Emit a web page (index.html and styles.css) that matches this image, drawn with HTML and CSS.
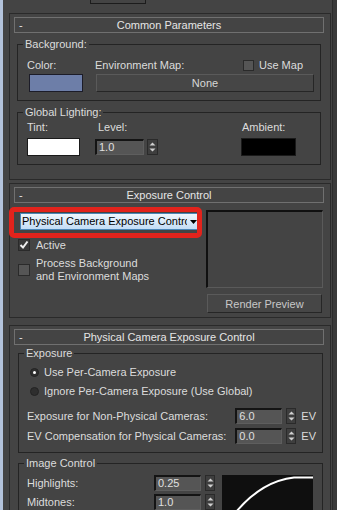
FILE: index.html
```html
<!DOCTYPE html>
<html lang="en">
<head>
  <meta charset="UTF-8">
  <meta name="viewport" content="width=device-width, initial-scale=1.0">
  <title>Exposure Control</title>
  <link rel="stylesheet" href="styles.css">
</head>
<body>
  <div class="main">
    <!-- tab strip above the rollouts -->
    <div class="tabs"><div class="tab"></div></div>

    <!-- Common Parameters rollout -->
    <div class="rollout rollout-common">
      <div class="rollout-head"><span class="minus">-</span><span class="title">Common Parameters</span><span class="minus"></span></div>

      <fieldset class="group group-bg">
        <legend>Background:</legend>
        <div class="group-body cols">
          <div class="col col-color">
            <span class="lbl">Color:</span>
            <span class="swatch swatch-blue"></span>
          </div>
          <div class="col col-env">
            <div class="env-top">
              <span class="lbl env-lbl">Environment Map:</span>
              <label class="check"><span class="box"></span>Use Map</label>
            </div>
            <button class="btn btn-none">None</button>
          </div>
        </div>
      </fieldset>

      <fieldset class="group group-light">
        <legend>Global Lighting:</legend>
        <div class="group-body cols">
          <div class="col col-tint">
            <span class="lbl">Tint:</span>
            <span class="swatch swatch-white"></span>
          </div>
          <div class="col col-level">
            <span class="lbl level-lbl">Level:</span>
            <span class="spinner spinner-level">
              <span class="spin-field">1.0</span>
              <span class="spin-btn"><svg width="7" height="12" viewBox="0 0 7 12"><path d="M3.5 1.5 L6.5 4.5 H0.5 Z M3.5 10.5 L6.5 7.5 H0.5 Z" fill="#d0d0d0"/></svg></span>
            </span>
          </div>
          <div class="col col-ambient">
            <span class="lbl ambient-lbl">Ambient:</span>
            <span class="swatch swatch-black"></span>
          </div>
        </div>
      </fieldset>
    </div>

    <!-- Exposure Control rollout -->
    <div class="rollout rollout-exposure">
      <div class="rollout-head"><span class="minus">-</span><span class="title">Exposure Control</span><span class="minus"></span></div>

      <div class="exposure-body">
        <div class="exp-left">
          <div class="highlight">
            <div class="dropdown">
              <span class="dd-text">Physical Camera Exposure Control</span>
              <svg class="dd-arrow" width="7" height="4" viewBox="0 0 7 4"><path d="M0 0 H7 L3.5 4 Z" fill="#000"/></svg>
            </div>
          </div>
          <label class="check check-active">
            <span class="box box-on"><svg width="10" height="10" viewBox="0 0 10 10"><path d="M1.5 5 L4 7.5 L8.5 1.5" fill="none" stroke="#f0f0f0" stroke-width="2"/></svg></span>
            Active
          </label>
          <label class="check check-process">
            <span class="box"></span>
            <span>Process Background<br>and Environment Maps</span>
          </label>
        </div>
        <div class="exp-right">
          <div class="preview"></div>
          <button class="btn btn-preview">Render Preview</button>
        </div>
      </div>
    </div>

    <!-- Physical Camera Exposure Control rollout -->
    <div class="rollout rollout-phys">
      <div class="rollout-head"><span class="minus">-</span><span class="title">Physical Camera Exposure Control</span><span class="minus"></span></div>

      <fieldset class="group group-exp">
        <legend>Exposure</legend>
        <div class="group-body">
          <label class="radio"><span class="dot dot-on"></span>Use Per-Camera Exposure</label>
          <label class="radio radio-second"><span class="dot"></span>Ignore Per-Camera Exposure (Use Global)</label>
          <div class="field-row field-row-first">
            <span class="field-lbl">Exposure for Non-Physical Cameras:</span>
            <span class="spinner">
              <span class="spin-field">6.0</span>
              <span class="spin-btn"><svg width="7" height="12" viewBox="0 0 7 12"><path d="M3.5 1.5 L6.5 4.5 H0.5 Z M3.5 10.5 L6.5 7.5 H0.5 Z" fill="#d0d0d0"/></svg></span>
            </span>
            <span class="unit">EV</span>
          </div>
          <div class="field-row">
            <span class="field-lbl">EV Compensation for Physical Cameras:</span>
            <span class="spinner">
              <span class="spin-field">0.0</span>
              <span class="spin-btn"><svg width="7" height="12" viewBox="0 0 7 12"><path d="M3.5 1.5 L6.5 4.5 H0.5 Z M3.5 10.5 L6.5 7.5 H0.5 Z" fill="#d0d0d0"/></svg></span>
            </span>
            <span class="unit">EV</span>
          </div>
        </div>
      </fieldset>

      <fieldset class="group group-image">
        <legend>Image Control</legend>
        <div class="group-body image-body">
          <div class="image-fields">
            <div class="field-row">
              <span class="img-lbl">Highlights:</span>
              <span class="spinner">
                <span class="spin-field">0.25</span>
                <span class="spin-btn"><svg width="7" height="12" viewBox="0 0 7 12"><path d="M3.5 1.5 L6.5 4.5 H0.5 Z M3.5 10.5 L6.5 7.5 H0.5 Z" fill="#d0d0d0"/></svg></span>
              </span>
            </div>
            <div class="field-row field-row-mid">
              <span class="img-lbl">Midtones:</span>
              <span class="spinner">
                <span class="spin-field">1.0</span>
                <span class="spin-btn"><svg width="7" height="12" viewBox="0 0 7 12"><path d="M3.5 1.5 L6.5 4.5 H0.5 Z M3.5 10.5 L6.5 7.5 H0.5 Z" fill="#d0d0d0"/></svg></span>
              </span>
            </div>
          </div>
          <svg class="curve" width="91" height="60" viewBox="0 0 91 60">
            <rect x="0" y="0" width="91" height="60" fill="#0f0f0f"/>
            <path d="M10 42 C 30 16, 50 5, 72 2.5 L 91 2.5" fill="none" stroke="#fff" stroke-width="2"/>
          </svg>
        </div>
      </fieldset>
    </div>
  </div>

  <div class="scroll"></div>
</body>
</html>
```

FILE: styles.css
```css
/* base: 3ds Max dark panel */
* {
  box-sizing: border-box;
}

body {
  margin: 0;
  width: 337px;
  height: 510px;
  overflow: hidden;
  display: flex;
  background-color: #444;
  border-left: 3px solid #b3c3db;
  font-family: "Liberation Sans", Arial, sans-serif;
  font-size: 11px;
  line-height: 13px;
  color: #dcdcdc;
}

.main {
  width: 329px;
}

.scroll {
  width: 5px;
  background-color: #3a3a3a;
  border-left: 1px solid #2c2c2c;
}

/* tab strip */
.tabs {
  height: 13px;
}

.tab {
  margin-left: 87px;
  width: 56px;
  height: 4px;
  border: 1px solid #1c1c1c;
  border-top: none;
}

/* rollouts */
.rollout {
  margin: 0 0 3px 6px;
  width: 322px;
  border: 1px solid #2a2a2a;
  padding: 3px 6px 14px 4px;
}

.rollout-head {
  display: flex;
  height: 16px;
  border: 1px solid #707070;
  line-height: 14px;
  color: #e6e6e6;
}

.rollout-head .minus {
  width: 14px;
  padding-left: 4px;
}

.rollout-head .title {
  flex: 1;
  text-align: center;
}

/* groups */
.group {
  margin: 5px 3px 0 3px;
  padding: 0;
  min-width: 0;
  border: 1px solid #242424;
}

.group legend {
  margin-left: 5px;
  padding: 0 2px;
  font-size: 11px;
  line-height: 12px;
}

.group-body {
  padding: 9px 6px 8px 9px;
}

.cols {
  display: flex;
}

.col {
  display: flex;
  flex-direction: column;
}

.lbl {
  display: block;
  height: 13px;
}

.col-color,
.col-tint {
  width: 68px;
}

.col-level {
  width: 146px;
}

.level-lbl {
  padding-left: 3px;
}

.ambient-lbl {
  padding-left: 1px;
}

.env-top {
  display: flex;
  align-items: center;
  height: 13px;
}

.env-lbl {
  width: 148px;
}

/* colour swatches */
.swatch {
  display: block;
  height: 18px;
  border: 1px solid #1a1a1a;
}

.swatch-blue {
  margin: 2px 0 0 2px;
  width: 54px;
  background-color: #6d7ea8;
  border-color: #1c1c28;
}

.swatch-white {
  margin-top: 4px;
  width: 53px;
  background-color: #fff;
}

.swatch-black {
  margin-top: 4px;
  width: 55px;
  background-color: #000;
}

.group-light .group-body {
  padding-top: 3px;
}

/* buttons */
.btn {
  display: block;
  padding: 0;
  font-family: inherit;
  font-size: 11px;
  color: #d8d8d8;
  background-color: #464646;
  border: 1px solid #262626;
  border-top-color: #5a5a5a;
  border-left-color: #5a5a5a;
}

.btn-none {
  margin: 2px 0 0 1px;
  width: 218px;
  height: 18px;
}

/* checkboxes */
.check {
  display: flex;
  align-items: center;
}

.box {
  display: block;
  width: 11px;
  height: 11px;
  margin-right: 5px;
  background-color: #555;
  border: 1px solid #2a2a2a;
}

.box-on {
  width: 12px;
  height: 12px;
  background-color: #3a3a3a;
  display: flex;
  align-items: center;
  justify-content: center;
}

/* spinners */
.spinner {
  display: flex;
  height: 16px;
}

.spin-field {
  display: block;
  width: 47px;
  padding-left: 2px;
  line-height: 13px;
  background-color: #555;
  border-top: 2px solid #141414;
  border-left: 2px solid #141414;
  border-right: 1px solid #5e5e5e;
  border-bottom: 1px solid #5e5e5e;
  color: #e0e0e0;
}

.spin-btn {
  display: flex;
  align-items: center;
  justify-content: center;
  width: 10px;
  margin-left: 4px;
  background-color: #3e3e3e;
  border: 1px solid #2a2a2a;
}

.spinner-level {
  margin-top: 5px;
}

.spinner-level .spin-field {
  width: 49px;
}

.spinner-level .spin-btn {
  width: 11px;
  margin-left: 3px;
}

/* exposure control */
.rollout-exposure {
  padding-bottom: 4px;
  margin-bottom: 7px;
}

.exposure-body {
  display: flex;
  align-items: flex-start;
}

.exp-left {
  width: 193px;
  margin-left: -5px;
}

.highlight {
  margin-top: 4px;
  height: 31px;
  border: 5px solid #e2231c;
  border-radius: 5px;
  padding: 1px 0 0 6px;
}

.dropdown {
  display: flex;
  align-items: center;
  width: 177px;
  height: 17px;
  background: linear-gradient(#eef6fd, #c3ddf6);
  border: 1px solid #4a86b8;
  border-right: none;
  color: #000;
}

.dd-text {
  width: 166px;
  padding-left: 1px;
  white-space: nowrap;
  overflow: hidden;
}

.dd-arrow {
  margin-left: 3px;
}

.check-active {
  margin: 1px 0 0 9px;
  height: 12px;
}

.check-active .box {
  margin-right: 6px;
}

.check-process {
  margin: 6px 0 0 9px;
}

.check-process .box {
  width: 12px;
  height: 12px;
  margin-right: 6px;
}

.exp-right {
  width: 117px;
  margin: 7px 0 0 4px;
}

.preview {
  height: 78px;
  border-top: 2px solid #101010;
  border-left: 2px solid #101010;
  border-right: 1px solid #5a5a5a;
  border-bottom: 1px solid #5a5a5a;
}

.btn-preview {
  margin: 6px 0 0 1px;
  width: 115px;
  height: 19px;
  color: #c8c8c8;
}

/* physical camera exposure control */
.group-exp {
  margin: 2px 1px 0 4px;
}

.group-exp .group-body {
  padding: 7px 6px 8px 8px;
}

.radio {
  display: flex;
  align-items: center;
  margin-left: 3px;
  height: 13px;
}

.radio-second {
  margin-top: 6px;
}

.dot {
  display: flex;
  align-items: center;
  justify-content: center;
  width: 9px;
  height: 9px;
  margin-right: 5px;
  border-radius: 50%;
  background-color: #2e2e2e;
  border: 1px solid #232323;
}

.dot-on::after {
  content: "";
  width: 3px;
  height: 3px;
  border-radius: 50%;
  background-color: #fff;
}

.field-row {
  display: flex;
  align-items: center;
  margin-top: 4px;
  height: 16px;
}

.field-row-first {
  margin-top: 10px;
}

.field-lbl {
  width: 213px;
}

.unit {
  margin-left: 5px;
}

.group-image {
  margin: 4px 1px 0 4px;
}

.image-body {
  display: flex;
  align-items: flex-start;
  padding: 6px 6px 8px 8px;
}

.image-fields {
  width: 188px;
}

.image-fields .field-row {
  margin-top: 0;
}

.image-fields .field-row-mid {
  margin-top: 3px;
}

.img-lbl {
  width: 128px;
}

.curve {
  display: block;
  margin-left: 7px;
}
```
